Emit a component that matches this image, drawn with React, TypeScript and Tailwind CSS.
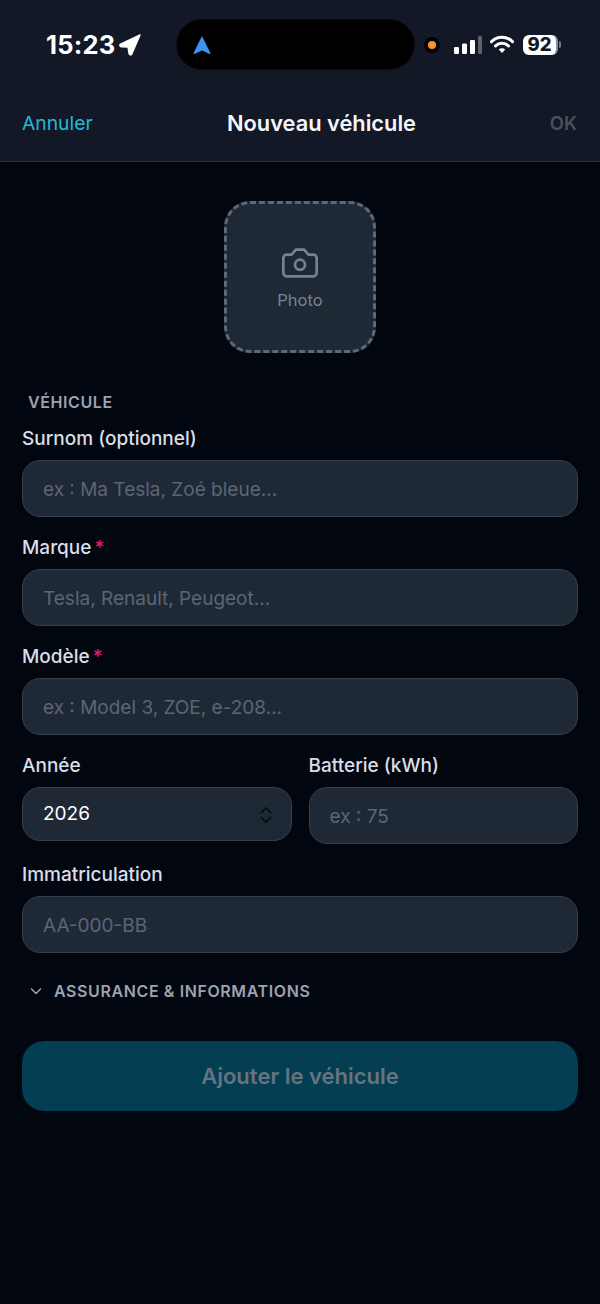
import React from "react";

const font = { fontFamily: "Inter, 'Liberation Sans', sans-serif" };

function Label({ text, required }: { text: string; required?: boolean }) {
  return (
    <div className="h-[22px] pt-[1px] flex items-center text-[19px] leading-[22px] font-medium text-[#d9dee8]">
      {text}
      {required && <span className="ml-[3px] text-[#e11d5f]">*</span>}
    </div>
  );
}

function Field({ placeholder }: { placeholder: string }) {
  return (
    <input
      readOnly
      placeholder={placeholder}
      className="mt-[11px] block w-full h-[57px] rounded-[18px] border border-[#363f4d] bg-[#1f2936] pl-[20px] pr-[20px] pt-[1px] text-[19px] text-white outline-none placeholder:text-[#5b6575]"
    />
  );
}

export default function App() {
  return (
    <div style={font} className="w-[600px] h-[1304px] bg-[#02060f] flex flex-col overflow-hidden">
      <header className="h-[162px] shrink-0 bg-[#131827] border-b border-[#2c3240] flex flex-col">
        <div className="h-[88px] pt-[19px] flex items-start">
          <div className="w-[176px] h-[51px] pl-[46px] flex items-center gap-[4px]">
            <span className="text-[25.5px] leading-none font-bold text-white tracking-[0.2px]">15:23</span>
            <svg width="22" height="22" viewBox="0 0 22 22">
              <path d="M21 1 L1 10.5 Q0.5 12.6 2.5 12.8 L9 13 L10 19.5 Q10.6 21.5 12.6 20.5 Z" fill="#fff" stroke="#fff" strokeWidth="1.4" strokeLinejoin="round" />
            </svg>
          </div>
          <div className="w-[239px] h-[51px] rounded-full bg-black border border-[#0a0c12] flex items-center pl-[16px]">
            <svg width="18" height="20" viewBox="0 0 18 20">
              <path d="M9 1 L17.4 18 Q17.6 19.4 16 18.8 L9 15.6 L2 18.8 Q0.4 19.4 0.6 18 Z" fill="#3b93f5" />
            </svg>
          </div>
          <div className="h-[51px] flex items-center pl-[9px]">
            <div className="w-[16px] h-[16px] rounded-full bg-black flex items-center justify-center">
              <div className="w-[8px] h-[8px] rounded-full bg-[#f7932e]" />
            </div>
            <svg className="ml-[14px]" width="28" height="18" viewBox="0 0 28 18">
              <rect x="0" y="11" width="5" height="7" rx="1.2" fill="#fff" />
              <rect x="8" y="7.5" width="5" height="10.5" rx="1.2" fill="#fff" />
              <rect x="16" y="4" width="5" height="14" rx="1.2" fill="#fff" />
              <rect x="24" y="0" width="4" height="18" rx="1.2" fill="#5c6270" />
            </svg>
            <svg className="ml-[8px]" width="24" height="19" viewBox="0 0 26 19">
              <path d="M1.5 6.5 A16 16 0 0 1 24.5 6.5" fill="none" stroke="#fff" strokeWidth="3.2" strokeLinecap="round" />
              <path d="M6 11 A10 10 0 0 1 20 11" fill="none" stroke="#fff" strokeWidth="3.2" strokeLinecap="round" />
              <path d="M9.5 15 L13 18.8 L16.5 15 A5 5 0 0 0 9.5 15 Z" fill="#fff" />
            </svg>
            <div className="ml-[9px] w-[35px] h-[20px] rounded-[6px] bg-white border-r-[2px] border-r-[#8a8f99] flex items-center justify-center text-[18.5px] leading-none font-extrabold text-[#131827]">
              92
            </div>
            <div className="ml-[1px] w-[2px] h-[7px] rounded-r-full bg-[#777c88]" />
          </div>
        </div>
        <div className="h-[70px] px-[22px] flex items-center text-[20px]">
          <span className="w-[205px] text-[19.3px] text-[#22b8d6]">Annuler</span>
          <span className="font-semibold text-[#f3f5f9] text-[21.8px]">Nouveau véhicule</span>
          <span className="flex-1 pt-[1px] pr-[1px] text-right font-semibold text-[18.5px] text-[#4a505c]">OK</span>
        </div>
      </header>

      <main className="flex-1 px-[22px] pt-[39px]">
        <div className="mx-auto w-[152px] h-[152px] rounded-[26px] border-[3px] border-dashed border-[#5e6876] bg-[#1f2936] flex flex-col items-center pt-[39px]">
          <svg width="40" height="40" viewBox="0 0 24 24" fill="none" stroke="#778191" strokeWidth="1.6" strokeLinecap="round" strokeLinejoin="round">
            <path d="M14.5 4h-5L7 7H4a2 2 0 0 0-2 2v9a2 2 0 0 0 2 2h16a2 2 0 0 0 2-2V9a2 2 0 0 0-2-2h-3l-2.5-3z" />
            <circle cx="12" cy="13" r="3" />
          </svg>
          <span className="mt-[7px] text-[16.5px] leading-[20px] font-normal text-[#778191]">Photo</span>
        </div>

        <div className="mt-[39px] pl-[6px] h-[20px] flex items-center text-[16px] font-semibold tracking-[0.6px] text-[#9ba3b0]">VÉHICULE</div>

        <div className="mt-[15px]">
          <Label text="Surnom (optionnel)" />
          <Field placeholder="ex : Ma Tesla, Zoé bleue..." />
        </div>
        <div className="mt-[19px]">
          <Label text="Marque" required />
          <Field placeholder="Tesla, Renault, Peugeot..." />
        </div>
        <div className="mt-[19px]">
          <Label text="Modèle" required />
          <Field placeholder="ex : Model 3, ZOE, e-208..." />
        </div>

        <div className="mt-[19px] flex gap-[17px]">
          <div className="flex-1">
            <Label text="Année" />
            <div className="mt-[11px] h-[54px] rounded-[18px] border border-[#363f4d] bg-[#1f2936] pl-[20px] pr-[17px] pt-[1px] flex items-center justify-between text-[19px] text-white">
              <span>2026</span>
              <svg width="16" height="18" viewBox="0 0 16 18" fill="none" stroke="#0b0f16" strokeWidth="2" strokeLinecap="round" strokeLinejoin="round">
                <path d="M3.5 6.5 L8 2 L12.5 6.5" />
                <path d="M3.5 11.5 L8 16 L12.5 11.5" />
              </svg>
            </div>
          </div>
          <div className="flex-1">
            <Label text="Batterie (kWh)" />
            <Field placeholder="ex : 75" />
          </div>
        </div>

        <div className="mt-[19px]">
          <Label text="Immatriculation" />
          <Field placeholder="AA-000-BB" />
        </div>

        <div className="mt-[26px] pl-[7px] h-[22px] pt-[1px] flex items-center">
          <svg width="14" height="14" viewBox="0 0 14 14" fill="none" stroke="#9ba3b0" strokeWidth="1.5" strokeLinecap="round" strokeLinejoin="round">
            <path d="M2.5 5 L7 9.5 L11.5 5" />
          </svg>
          <span className="ml-[11px] text-[16px] font-semibold tracking-[0.6px] text-[#9ba3b0]">ASSURANCE &amp; INFORMATIONS</span>
        </div>

        <button className="mt-[40px] w-full h-[70px] rounded-[22px] bg-[#033e52] flex items-center justify-center text-[22px] font-semibold text-[#667380]">
          Ajouter le véhicule
        </button>
      </main>
    </div>
  );
}
